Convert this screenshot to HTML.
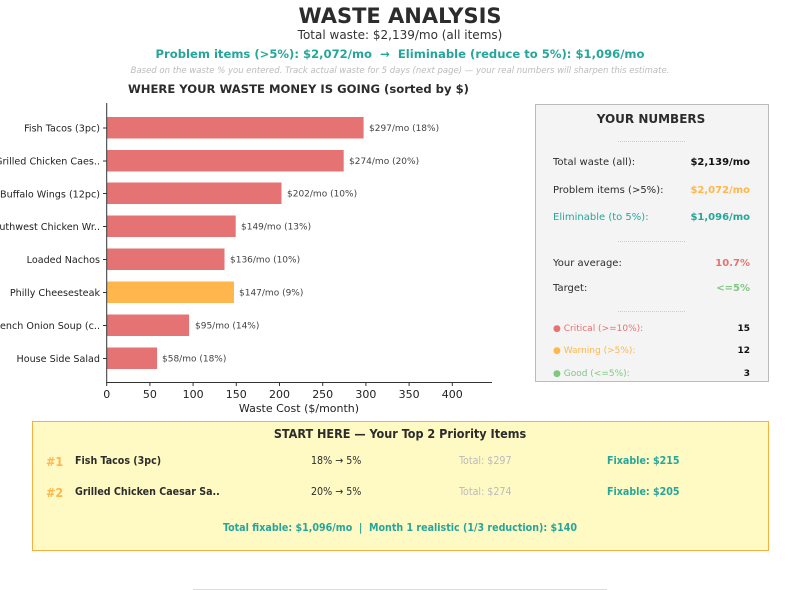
<!DOCTYPE html>
<html><head><meta charset="utf-8"><style>
body{margin:0;width:800px;height:590px;background:#fff;font-family:"DejaVu Sans","Liberation Sans",sans-serif;position:relative;overflow:hidden;color:#2c2c2c}
.a{position:absolute;white-space:nowrap}
.c{transform:translateX(-50%)}
.r{transform:translateX(-100%)}
.cd{font-family:"DejaVu Sans Condensed","DejaVu Sans",sans-serif;font-stretch:condensed}
</style></head><body>
<div class="a c" style="left:400px;top:4px;font-size:21px;font-weight:bold;color:#2c2c2c">WASTE ANALYSIS</div>
<div class="a c" style="left:400px;top:28px;font-size:12px;color:#333">Total waste: $2,139/mo (all items)</div>
<div class="a c" style="left:400px;top:47px;font-size:11.6px;font-weight:bold;color:#26a69a">Problem items (&gt;5%): $2,072/mo &nbsp;→&nbsp; Eliminable (reduce to 5%): $1,096/mo</div>
<div class="a c" style="left:400px;top:66px;font-size:8.5px;font-style:italic;color:#bbb">Based on the waste % you entered. Track actual waste for 5 days (next page) — your real numbers will sharpen this estimate.</div>
<div class="a" style="left:128px;top:82px;font-size:11.6px;font-weight:bold;color:#2c2c2c">WHERE YOUR WASTE MONEY IS GOING (sorted by $)</div>

<svg class="a" style="left:0;top:0" width="800" height="590" font-family="DejaVu Sans, sans-serif">
<g fill="#e57373">
<rect x="107" y="117" width="256.6" height="21.5"/>
<rect x="107" y="150" width="236.7" height="21.5"/>
<rect x="107" y="182.5" width="174.5" height="21.5"/>
<rect x="107" y="215.5" width="128.7" height="21.5"/>
<rect x="107" y="248.5" width="117.5" height="21.5"/>
<rect x="107" y="281.5" width="127" height="21.5" fill="#ffb74d"/>
<rect x="107" y="314.5" width="82.1" height="21.5"/>
<rect x="107" y="347.5" width="50.1" height="21.5"/>
</g>
<g stroke="#333" stroke-width="1">
<line x1="106.7" y1="103" x2="106.7" y2="382.5"/>
<line x1="106.2" y1="382.5" x2="492" y2="382.5"/>
</g>
<g font-size="9.6" fill="#222" text-anchor="end">
<text x="100" y="131.5">Fish Tacos (3pc)</text>
<text x="100" y="164.5">Grilled Chicken Caes..</text>
<text x="100" y="197.5">Buffalo Wings (12pc)</text>
<text x="100" y="230">uthwest Chicken Wr..</text>
<text x="100" y="263">Loaded Nachos</text>
<text x="100" y="296">Philly Cheesesteak</text>
<text x="100" y="329">ench Onion Soup (c..</text>
<text x="100" y="362">House Side Salad</text>
</g>
<g stroke="#333"><line x1="103" y1="128" x2="107" y2="128"/><line x1="103" y1="161" x2="107" y2="161"/><line x1="103" y1="193.5" x2="107" y2="193.5"/><line x1="103" y1="226.5" x2="107" y2="226.5"/><line x1="103" y1="259.5" x2="107" y2="259.5"/><line x1="103" y1="292.5" x2="107" y2="292.5"/><line x1="103" y1="325.5" x2="107" y2="325.5"/><line x1="103" y1="358.5" x2="107" y2="358.5"/></g>
<g font-size="9" fill="#444">
<text x="369" y="131">$297/mo (18%)</text>
<text x="349" y="164">$274/mo (20%)</text>
<text x="287" y="196.5">$202/mo (10%)</text>
<text x="241" y="229.5">$149/mo (13%)</text>
<text x="230" y="262.5">$136/mo (10%)</text>
<text x="239" y="295.5">$147/mo (9%)</text>
<text x="195" y="328.5">$95/mo (14%)</text>
<text x="162" y="361.5">$58/mo (18%)</text>
</g>
<g stroke="#333"><line x1="106.7" y1="382" x2="106.7" y2="386"/><line x1="149.9" y1="382" x2="149.9" y2="386"/><line x1="193.1" y1="382" x2="193.1" y2="386"/><line x1="236.3" y1="382" x2="236.3" y2="386"/><line x1="279.5" y1="382" x2="279.5" y2="386"/><line x1="322.7" y1="382" x2="322.7" y2="386"/><line x1="365.9" y1="382" x2="365.9" y2="386"/><line x1="409.1" y1="382" x2="409.1" y2="386"/><line x1="452.3" y1="382" x2="452.3" y2="386"/></g>
<g font-size="11" fill="#222" text-anchor="middle">
<text x="106.7" y="398">0</text><text x="149.9" y="398">50</text><text x="193.1" y="398">100</text><text x="236.3" y="398">150</text><text x="279.5" y="398">200</text><text x="322.7" y="398">250</text><text x="365.9" y="398">300</text><text x="409.1" y="398">350</text><text x="452.3" y="398">400</text>
<text x="299" y="412">Waste Cost ($/month)</text>
</g>
<line x1="193" y1="589.5" x2="607" y2="589.5" stroke="#ddd"/>
</svg>

<div class="a" style="left:535px;top:104px;width:232px;height:276px;background:#f4f4f4;border:1px solid #bbb"></div>
<div class="a c" style="left:651px;top:112px;font-size:12px;font-weight:bold;color:#2c2c2c">YOUR NUMBERS</div>
<div class="a" style="left:618px;top:141px;width:67px;border-top:1px dotted #ccc"></div>
<div class="a" style="left:618px;top:241px;width:67px;border-top:1px dotted #ccc"></div>
<div class="a" style="left:618px;top:311px;width:67px;border-top:1px dotted #ccc"></div>
<div style="font-size:10px">
<div class="a" style="left:553px;top:157px">Total waste (all):</div><div class="a r" style="left:750px;top:157px;font-weight:bold;color:#111">$2,139/mo</div>
<div class="a" style="left:553px;top:185px">Problem items (&gt;5%):</div><div class="a r" style="left:750px;top:185px;font-weight:bold;color:#ffb74d">$2,072/mo</div>
<div class="a" style="left:553px;top:212px;color:#26a69a">Eliminable (to 5%):</div><div class="a r" style="left:750px;top:212px;font-weight:bold;color:#26a69a">$1,096/mo</div>
<div class="a" style="left:553px;top:258px">Your average:</div><div class="a r" style="left:750px;top:258px;font-weight:bold;color:#e57373">10.7%</div>
<div class="a" style="left:553px;top:283px">Target:</div><div class="a r" style="left:750px;top:283px;font-weight:bold;color:#81c784">&lt;=5%</div>
</div>
<div style="font-size:9px">
<div class="a" style="left:553px;top:324px;color:#e57373">● Critical (&gt;=10%):</div><div class="a r" style="left:750px;top:324px;font-weight:bold;color:#111">15</div>
<div class="a" style="left:553px;top:346px;color:#ffb74d">● Warning (&gt;5%):</div><div class="a r" style="left:750px;top:346px;font-weight:bold;color:#111">12</div>
<div class="a" style="left:553px;top:369px;color:#81c784">● Good (&lt;=5%):</div><div class="a r" style="left:750px;top:369px;font-weight:bold;color:#111">3</div>
</div>

<div class="a" style="left:32px;top:421px;width:735px;height:128px;background:#fff9c4;border:1px solid #f5b041"></div>
<div class="a c cd" style="left:400px;top:426px;font-size:12.5px;font-weight:bold;color:#2c2c2c">START HERE — Your Top 2 Priority Items</div>
<div class="cd" style="font-size:10.6px">
<div class="a" style="left:46px;top:454px;font-size:12.5px;font-weight:bold;color:#ffb74d">#1</div>
<div class="a" style="left:75px;top:455px;font-weight:bold">Fish Tacos (3pc)</div>
<div class="a" style="left:311px;top:455px">18% → 5%</div>
<div class="a" style="left:459px;top:455px;color:#bbb">Total: $297</div>
<div class="a" style="left:607px;top:455px;font-weight:bold;color:#26a69a">Fixable: $215</div>
<div class="a" style="left:46px;top:485px;font-size:12.5px;font-weight:bold;color:#ffb74d">#2</div>
<div class="a" style="left:75px;top:486px;font-weight:bold">Grilled Chicken Caesar Sa..</div>
<div class="a" style="left:311px;top:486px">20% → 5%</div>
<div class="a" style="left:459px;top:486px;color:#bbb">Total: $274</div>
<div class="a" style="left:607px;top:486px;font-weight:bold;color:#26a69a">Fixable: $205</div>
<div class="a c" style="left:400px;top:522px;font-weight:bold;color:#26a69a">Total fixable: $1,096/mo &nbsp;| &nbsp;Month 1 realistic (1/3 reduction): $140</div>
</div>
</body></html>
